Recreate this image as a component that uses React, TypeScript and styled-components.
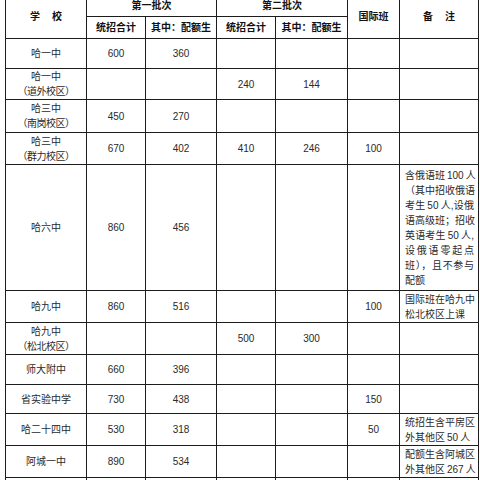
import * as React from 'react'
import styled, { createGlobalStyle } from 'styled-components'

const GlobalStyle = createGlobalStyle`
  html, body {
    margin: 0;
    padding: 0;
    background: #fff;
    overflow: hidden;
  }
  body {
    font-family: "Liberation Sans", "Noto Sans CJK SC", sans-serif;
  }
`

const Page = styled.div`
  width: 480px;
  height: 480px;
  overflow: hidden;
  padding-left: 5px;
  box-sizing: border-box;
`

const Table = styled.table`
  margin-top: -6px;
  border-collapse: collapse;
  table-layout: fixed;
  width: 473px;
  color: #2a2a2a;
  font-size: 10px;
  line-height: 15px;
`

const Cell = styled.td<{ $h?: number }>`
  border: 1px solid #1c1c1c;
  height: ${(p) => (p.$h ? p.$h - 1 : 20)}px;
  padding: 0;
  text-align: center;
  vertical-align: middle;
`

const HeadCell = styled(Cell)`
  font-weight: bold;
  color: #111;
`

const Spaced = styled.span<{ $gap: number }>`
  letter-spacing: ${(p) => p.$gap}px;
  margin-right: -${(p) => p.$gap}px;
`

const Note = styled(Cell)`
  text-align: left;
  padding: 0 4px 0 5px;
`

const NoteLine = styled.div<{ $last?: boolean }>`
  text-align: ${(p) => (p.$last ? 'left' : 'justify')};
  text-align-last: ${(p) => (p.$last ? 'left' : 'justify')};
  white-space: nowrap;
`

const Campus = styled.div`
  letter-spacing: -0.5px;
`

type Row = {
  name: string
  campus?: string
  h: number
  vals: string[]
  note?: string[]
}

// thin spaces keep the note lines inside their 70px column
const t = '\u2009'

const rows: Row[] = [
  { name: '哈一中', h: 30, vals: ['600', '360', '', '', ''] },
  { name: '哈一中', campus: '（道外校区）', h: 31, vals: ['', '', '240', '144', ''] },
  { name: '哈三中', campus: '（南岗校区）', h: 33, vals: ['450', '270', '', '', ''] },
  { name: '哈三中', campus: '（群力校区）', h: 32, vals: ['670', '402', '410', '246', '100'] },
  {
    name: '哈六中',
    h: 126,
    vals: ['860', '456', '', '', ''],
    note: [
      `含俄语班${t}100${t}人`,
      '（其中招收俄语',
      `考生${t}50${t}人,设俄`,
      '语高级班；招收',
      `英语考生${t}50${t}人,`,
      '设俄语零起点',
      '班），且不参与',
      '配额',
    ],
  },
  { name: '哈九中', h: 32, vals: ['860', '516', '', '', '100'], note: ['国际班在哈九中', '松北校区上课'] },
  { name: '哈九中', campus: '（松北校区）', h: 32, vals: ['', '', '500', '300', ''] },
  { name: '师大附中', h: 30, vals: ['660', '396', '', '', ''] },
  { name: '省实验中学', h: 29, vals: ['730', '438', '', '', '150'] },
  { name: '哈二十四中', h: 32, vals: ['530', '318', '', '', '50'], note: ['统招生含平房区', `外其他区${t}50${t}人`] },
  { name: '阿城一中', h: 32, vals: ['890', '534', '', '', ''], note: ['配额生含阿城区', `外其他区${t}267${t}人`] },
  { name: '', h: 30, vals: ['', '', '', '', ''] },
]

const colWidths = [81, 59, 71, 59, 72, 52, 79]

export default function App () {
  return (
    <Page>
      <GlobalStyle />
      <Table>
        <colgroup>
          {colWidths.map((w, i) => (
            <col key={i} style={{ width: w }} />
          ))}
        </colgroup>
        <tbody>
          <tr>
            <HeadCell rowSpan={2} $h={22}>
              <Spaced $gap={12}>学校</Spaced>
            </HeadCell>
            <HeadCell colSpan={2} $h={22}>第一批次</HeadCell>
            <HeadCell colSpan={2} $h={22}>第二批次</HeadCell>
            <HeadCell rowSpan={2} $h={22}>国际班</HeadCell>
            <HeadCell rowSpan={2} $h={22}>
              <Spaced $gap={12}>备注</Spaced>
            </HeadCell>
          </tr>
          <tr>
            <HeadCell $h={22}>统招合计</HeadCell>
            <HeadCell $h={22}>其中：配额生</HeadCell>
            <HeadCell $h={22}>统招合计</HeadCell>
            <HeadCell $h={22}>其中：配额生</HeadCell>
          </tr>
          {rows.map((r, i) => (
            <tr key={i}>
              <Cell $h={r.h}>
                <div>{r.name}</div>
                {r.campus && <Campus>{r.campus}</Campus>}
              </Cell>
              {r.vals.map((v, j) => (
                <Cell key={j} $h={r.h}>{v}</Cell>
              ))}
              <Note $h={r.h}>
                {r.note &&
                  r.note.map((line, k) => (
                    <NoteLine key={k} $last={k === r.note!.length - 1}>
                      {line}
                    </NoteLine>
                  ))}
              </Note>
            </tr>
          ))}
        </tbody>
      </Table>
    </Page>
  )
}
